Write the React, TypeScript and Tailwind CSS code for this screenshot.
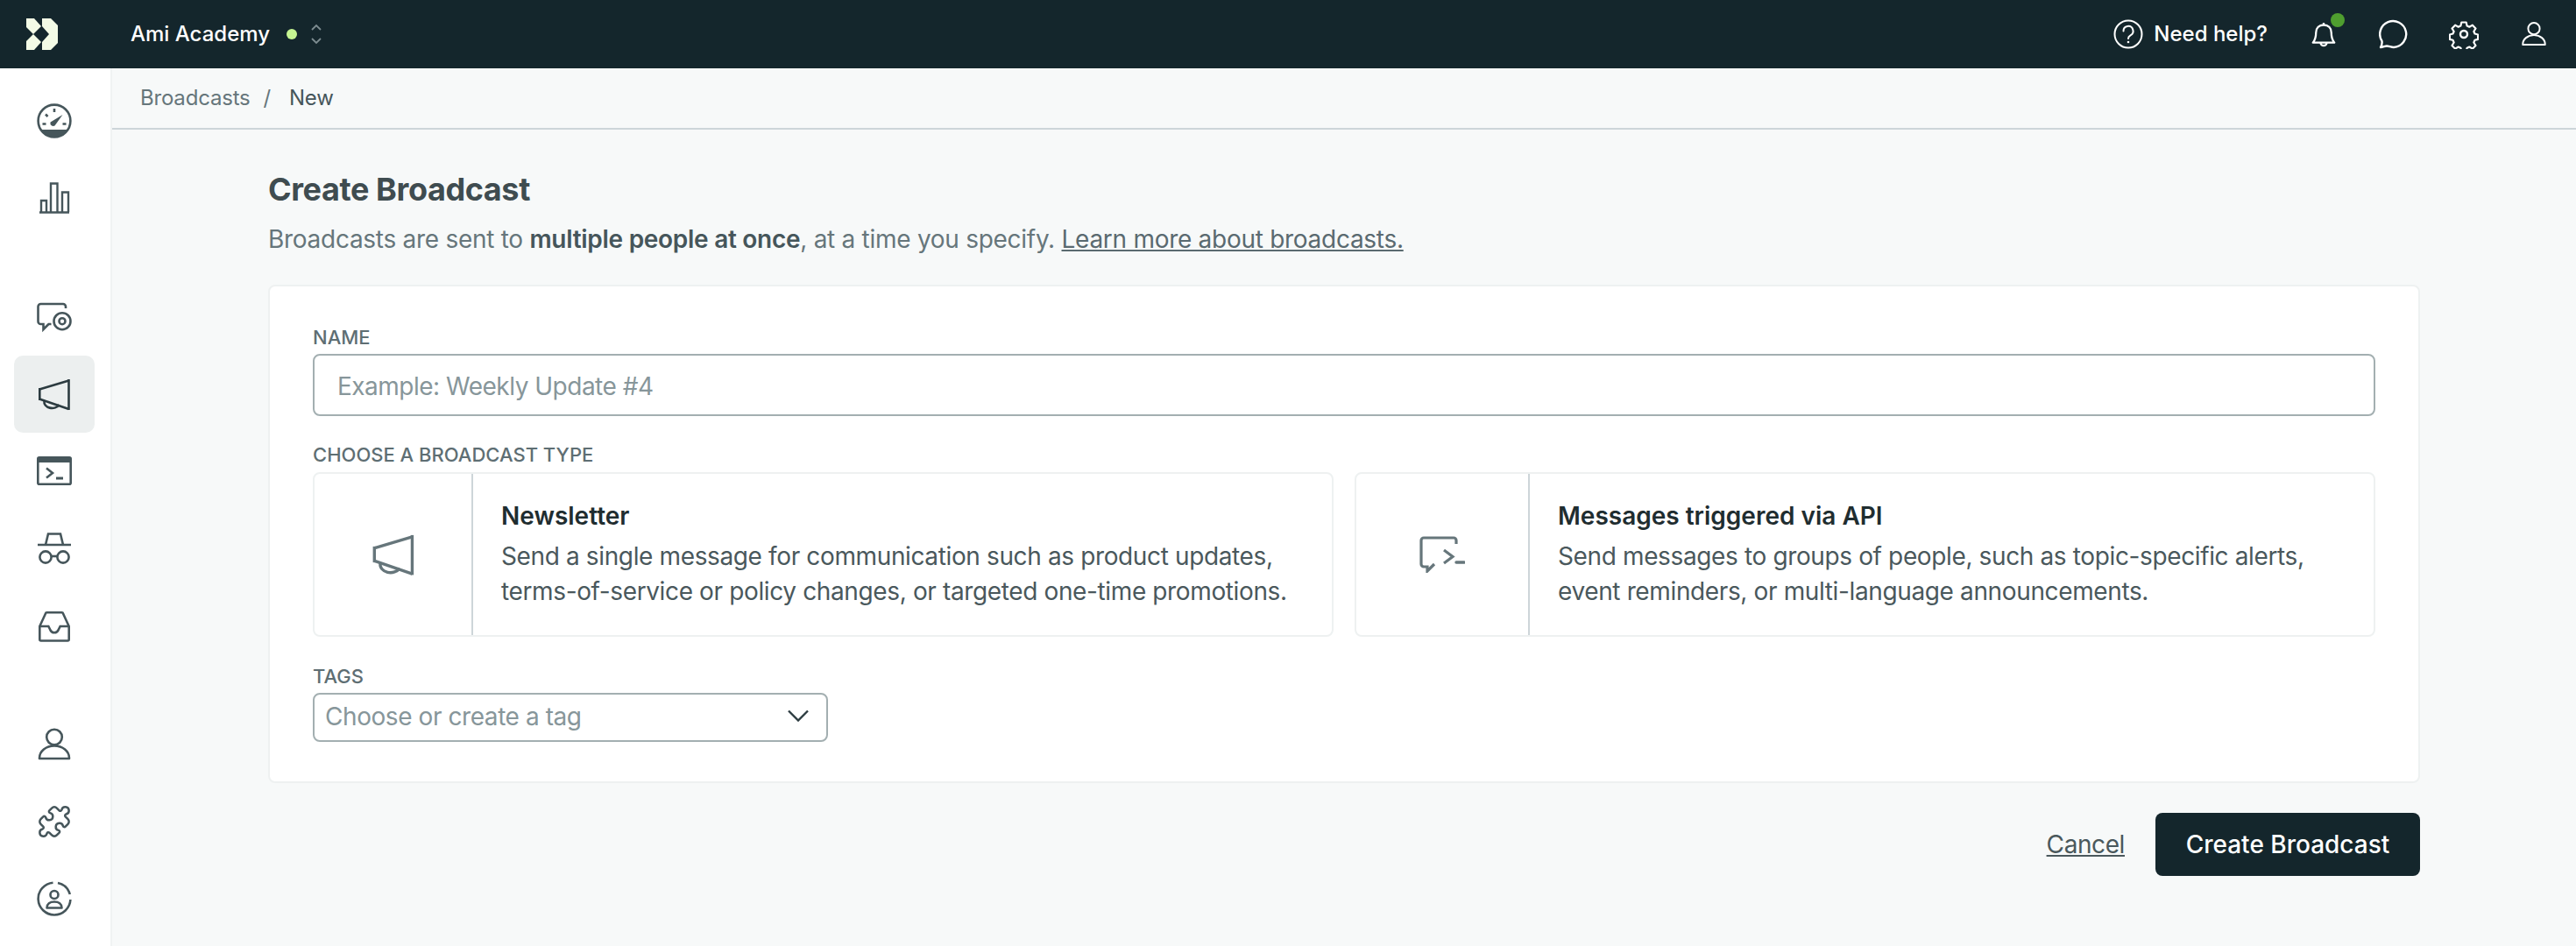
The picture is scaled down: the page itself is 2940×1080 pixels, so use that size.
import { Puzzle as PuzzlePiece } from "lucide-react";

const ink = "#46565b";

type IconProps = { className?: string };

const Gauge = ({ className }: IconProps) => (
  <svg viewBox="0 0 40 40" className={className} fill="none" stroke="currentColor" strokeWidth="2.6">
    <circle cx="20" cy="20" r="18.4" />
    <path d="M4.600 30h30.800A18.400 18.400 0 0 1 4.600 30z" fill="currentColor" stroke="none" />
    <path d="M20 6v4M10 12.500l2.500 2.500M6.500 23.500h4M29.500 23.500h4" />
    <path d="M29.500 13 15.500 21.500a3.500 3.500 0 0 0 5 4z" fill="currentColor" stroke="none" />
  </svg>
);

const Chart = ({ className }: IconProps) => (
  <svg viewBox="0 0 40 40" className={className} fill="none" stroke="currentColor" strokeWidth="2.4">
    <path d="M3 36.500h34" />
    <path d="M5 36V23h6v13M16 36V3.500h7.500V36M29 36V13.500h7V36" />
  </svg>
);

const ChatEye = ({ className }: IconProps) => (
  <svg viewBox="0 0 40 40" className={className} fill="none" stroke="currentColor" strokeWidth="2.6">
    <path d="M33 10V8a3 3 0 0 0-3-3H4.500a3 3 0 0 0-3 3v17a3 3 0 0 0 3 3h3v6l6-6h3" />
    <circle cx="29" cy="24.700" r="9.500" />
    <circle cx="29" cy="24.700" r="3.500" />
  </svg>
);

const Megaphone = ({ className }: IconProps) => (
  <svg viewBox="0 0 40 40" className={className} fill="none" stroke="currentColor" strokeWidth="2.6">
    <path d="M36.500 3v35" />
    <path d="M36.500 4.500 3 14.500M36.500 37 3 25.500" />
    <path d="M3.300 13v14" />
    <path d="M8.500 28a9 7 0 0 0 17 4" />
  </svg>
);

const Terminal = ({ className }: IconProps) => (
  <svg viewBox="0 0 40 40" className={className} fill="none" stroke="currentColor" strokeWidth="2.6">
    <rect x="1.300" y="4.300" width="37.400" height="30.400" rx="1.500" />
    <path d="M1 4h38v6H1z" fill="currentColor" stroke="none" />
    <path d="M11 16.500l7 5.500-7 5.500" />
    <path d="M22 28h8" strokeWidth="3" />
  </svg>
);

const Spy = ({ className }: IconProps) => (
  <svg viewBox="0 0 40 40" className={className} fill="none" stroke="currentColor" strokeWidth="2.600">
    <path d="M1 16h38" />
    <path d="M10 16l3-12.500h14L30 16" />
    <circle cx="10" cy="30" r="6.600" />
    <circle cx="30" cy="30" r="6.600" />
    <path d="M16.500 29h7" />
  </svg>
);

const Inbox = ({ className }: IconProps) => (
  <svg viewBox="0 0 40 40" className={className} fill="none" stroke="currentColor" strokeWidth="2.600">
    <path d="M3.300 21v15a1.500 1.500 0 0 0 1.500 1.500h30.400a1.500 1.500 0 0 0 1.500-1.500V21L30 6.500a1.500 1.500 0 0 0-1.500-1.300h-17a1.500 1.500 0 0 0-1.500 1.300z" />
    <path d="M3.300 21h10l2 4a5 5 0 0 0 9.400 0l2-4h10" />
  </svg>
);

const User = ({ className }: IconProps) => (
  <svg viewBox="0 0 40 40" className={className} fill="none" stroke="currentColor" strokeWidth="2.600">
    <circle cx="20" cy="11.500" r="8.800" />
    <path d="M3 36v-.500C3 27.500 10.500 21.500 20 21.500s17 6 17 14v.500z" strokeLinejoin="round" />
  </svg>
);

const CircleUser = ({ className }: IconProps) => (
  <svg viewBox="0 0 40 40" className={className} fill="none" stroke="currentColor" strokeWidth="2.600">
    <path d="M18.500 1.700A18.400 18.400 0 1 0 38.400 21" />
    <path d="M24 2A18.400 18.400 0 0 1 37.800 15" />
    <circle cx="20" cy="15.500" r="4.500" />
    <path d="M11.500 30.500c0-4.500 3.500-7 8.500-7s8.500 2.500 8.500 7z" strokeLinejoin="round" />
  </svg>
);

const Puzzle = ({ className }: IconProps) => <PuzzlePiece className={className} strokeWidth={1.5} />;

const ChatCode = ({ className }: IconProps) => (
  <svg viewBox="0 0 52 42" className={className} fill="none" stroke="currentColor" strokeWidth="3.200">
    <path d="M42 9V5a3 3 0 0 0-3-3H5a3 3 0 0 0-3 3v27a3 3 0 0 0 3 3h4v5l8-8" />
    <path d="M28 16l10 7.500L28 31" />
    <path d="M42 30h9" strokeWidth="3.400" strokeLinecap="round" />
  </svg>
);

const navGroups = [
  [Gauge, Chart],
  [ChatEye, Megaphone, Terminal, Spy, Inbox],
  [User, Puzzle, CircleUser],
];

const TopBar = () => (
  <header className="h-[78px] bg-[#14262c] flex items-center text-white">
    <div className="w-[149px] pl-[30px]">
      <svg viewBox="0 0 36 36" className="w-9 h-9" fill="#f3fbe6">
        <path d="M0 0h9l8 9-9 9-8-8z" />
        <path d="M0 26l8-8 9 9-8 9H0z" />
        <path d="M18 0h10l8 8v20l-8 8H18v-9l8-9-8-9z" />
      </svg>
    </div>
    <span className="text-[24px] font-medium">Ami Academy</span>
    <span className="ml-[19px] w-3 h-3 rounded-full bg-[#c6f592]" />
    <svg viewBox="0 0 12 24" className="ml-[16px] w-3 h-6 text-[#7d8c90]" fill="none" stroke="currentColor" strokeWidth="1.800">
      <path d="M1 7l5-5 5 5M1 17l5 5 5-5" />
    </svg>
    <div className="ml-auto flex items-center">
      <svg viewBox="0 0 34 34" className="w-[34px] h-[34px]" fill="none" stroke="currentColor" strokeWidth="2">
        <circle cx="17" cy="17" r="15.500" />
        <path d="M11.500 13.500a5.500 5.500 0 1 1 8 4.800c-1.800 1-2.500 2-2.500 3.700" strokeLinecap="round" />
        <circle cx="17" cy="26" r="1.300" fill="currentColor" stroke="none" />
      </svg>
      <span className="ml-[12px] text-[24px] font-medium">Need help?</span>
      <div className="ml-[44px] relative w-10 h-10 flex items-center justify-center">
        <svg viewBox="0 0 32 34" className="w-7 h-[30px]" fill="none" stroke="currentColor" strokeWidth="2.600" strokeLinejoin="round">
          <path d="M16 2v3M6 15c0-6 4-10 10-10s10 4 10 10c0 7 1.500 10 4 13H2c2.500-3 4-6 4-13z" />
          <path d="M12 28a4 4 0 0 0 8 0" />
        </svg>
        <span className="absolute top-[-4px] right-[-4px] w-4 h-4 rounded-full bg-[#4f9e2f]" />
      </div>
      <svg viewBox="0 0 34 34" className="ml-[43px] w-[34px] h-[34px]" fill="none" stroke="currentColor" strokeWidth="2.400" strokeLinejoin="round">
        <path d="M2 32c1.500-2.500 1.800-5 1.500-7A15 15 0 1 1 17 32c-3 0-5.500-1.500-8-1.500-2 0-4.500 1.500-7 1.500z" />
      </svg>
      <svg viewBox="0 0 34 34" className="ml-[46px] w-[34px] h-[34px]" fill="none" stroke="currentColor" strokeWidth="2.400" strokeLinejoin="round">
        <path d="M14 2h6l1 4.500 3 1.300 4-2.300 4 4.200-2.400 4 1.300 2.800 4 1v6l-4 1-1.300 3 2.400 4-4 4-4-2.400-3 1.300-1 4.500h-6l-1-4.500-3-1.300-4 2.400-4-4 2.400-4-1.300-3-4-1v-6l4-1 1.300-2.800-2.400-4 4-4.200 4 2.300 3-1.300z" transform="translate(1.700 1.700) scale(0.9)" />
        <circle cx="17" cy="17" r="4" />
      </svg>
      <div className="ml-[43px] mr-[28px] w-[40px] flex justify-center">
        <User className="w-[30px] h-[30px]" />
      </div>
    </div>
  </header>
);

const Sidebar = () => (
  <aside className="w-[128px] shrink-0 bg-white border-r-2 border-[#f0f3f3] pt-4 flex flex-col gap-12" style={{ color: ink }}>
    {navGroups.map((group, i) => (
      <div key={i} className="flex flex-col items-center pr-[2px]">
        {group.map((Icon, j) => (
          <div
            key={j}
            className={`w-[92px] h-[88px] rounded-[10px] flex items-center justify-center ${
              Icon === Megaphone ? "bg-[#ecefef] text-[#2c3b40]" : ""
            }`}
          >
            <Icon className="w-10 h-10" />
          </div>
        ))}
      </div>
    ))}
  </aside>
);

const TypeCard = ({ icon, iconWidth, title, lines }: { icon: React.ReactNode; iconWidth: string; title: string; lines: string[] }) => (
  <div className="flex h-[188px] rounded-lg border-2 border-[#eef1f1] bg-white">
    <div className={`${iconWidth} shrink-0 border-r-2 border-[#cdd5d9] flex items-center justify-center text-[#66767b]`}>{icon}</div>
    <div className="pl-[32px] pt-[28px]">
      <div className="text-[28px] leading-[40px] font-semibold text-[#1f2d30]">{title}</div>
      <p className="text-[28px] leading-[40px] tracking-[-0.37px] text-[#4a585c] mt-[6px]">
        {lines[0]}
        <br />
        {lines[1]}
      </p>
    </div>
  </div>
);

const Label = ({ children }: { children: string }) => (
  <label className="block text-[22px] leading-[30px] font-medium uppercase text-[#5e6e73]">{children}</label>
);

export default function App() {
  return (
    <div className="h-[1080px] overflow-hidden bg-[#f7f9f9] flex flex-col" style={{ fontFamily: "Inter, 'Noto Sans', sans-serif" }}>
      <TopBar />
      <div className="flex flex-1 min-h-0">
        <Sidebar />
        <main className="flex-1 min-w-0">
          <div className="h-[70px] border-b-2 border-[#cdd5d9] flex items-center pl-[32px] text-[24px] tracking-[-0.2px]">
            <span className="text-[#66767b]">Broadcasts</span>
            <span className="ml-[15px] text-[#66767b]">/</span>
            <span className="ml-[21px] text-[#46565b]">New</span>
          </div>
          <div className="mx-[178px]">
            <h1 className="mt-[46px] text-[36px] leading-[44px] font-bold tracking-[-0.4px] text-[#3f4c50]">Create Broadcast</h1>
            <p className="mt-[14px] text-[28px] leading-[42px] tracking-[-0.28px] text-[#66767b]">
              Broadcasts are sent to <b className="font-semibold text-[#46565b]">multiple people at once</b>, at a time you specify.{" "}
              <a className="underline text-[#5a6a70]">Learn more about broadcasts.</a>
            </p>
            <div className="mt-[31px] h-[569px] rounded-lg border-2 border-[#eef1f1] bg-white px-[49px] pt-[43px]">
              <Label>NAME</Label>
              <input
                readOnly
                placeholder="Example: Weekly Update #4"
                className="mt-[4px] block w-full h-[71px] rounded-lg border-2 border-[#a3afb1] bg-white px-[26px] pt-[2px] text-[28px] tracking-[-0.5px] placeholder:text-[#87969a] outline-none"
              />
              <div className="mt-[29px]">
                <Label>Choose a broadcast type</Label>
              </div>
              <div className="mt-[5px] grid grid-cols-2 gap-6">
                <TypeCard
                  icon={<Megaphone className="w-[52px] h-[52px]" />}
                  iconWidth="w-[181px]"
                  title="Newsletter"
                  lines={[
                    "Send a single message for communication such as product updates,",
                    "terms-of-service or policy changes, or targeted one-time promotions.",
                  ]}
                />
                <TypeCard
                  icon={<ChatCode className="w-[52px] h-[42px]" />}
                  iconWidth="w-[198px]"
                  title="Messages triggered via API"
                  lines={[
                    "Send messages to groups of people, such as topic-specific alerts,",
                    "event reminders, or multi-language announcements.",
                  ]}
                />
              </div>
              <div className="mt-[30px]">
                <Label>Tags</Label>
              </div>
              <div className="mt-[4px] w-[588px] h-[56px] rounded-lg border-2 border-[#a3afb1] flex items-center justify-between pl-[12px] pr-[20px]">
                <span className="text-[28px] tracking-[-0.43px] pb-[2px] text-[#87969a]">Choose or create a tag</span>
                <svg viewBox="0 0 24 14" className="w-6 h-[14px] mb-[4px] text-[#2c3b40]" fill="none" stroke="currentColor" strokeWidth="2.400">
                  <path d="M1 1.500 12 12.500 23 1.500" />
                </svg>
              </div>
            </div>
            <div className="mt-[34px] flex items-center justify-end">
              <a className="text-[28px] tracking-[-0.4px] underline text-[#4a585c]">Cancel</a>
              <button className="ml-[35px] w-[302px] h-[72px] rounded-lg bg-[#14262c] text-white text-[28px] font-medium">Create Broadcast</button>
            </div>
          </div>
        </main>
      </div>
    </div>
  );
}
